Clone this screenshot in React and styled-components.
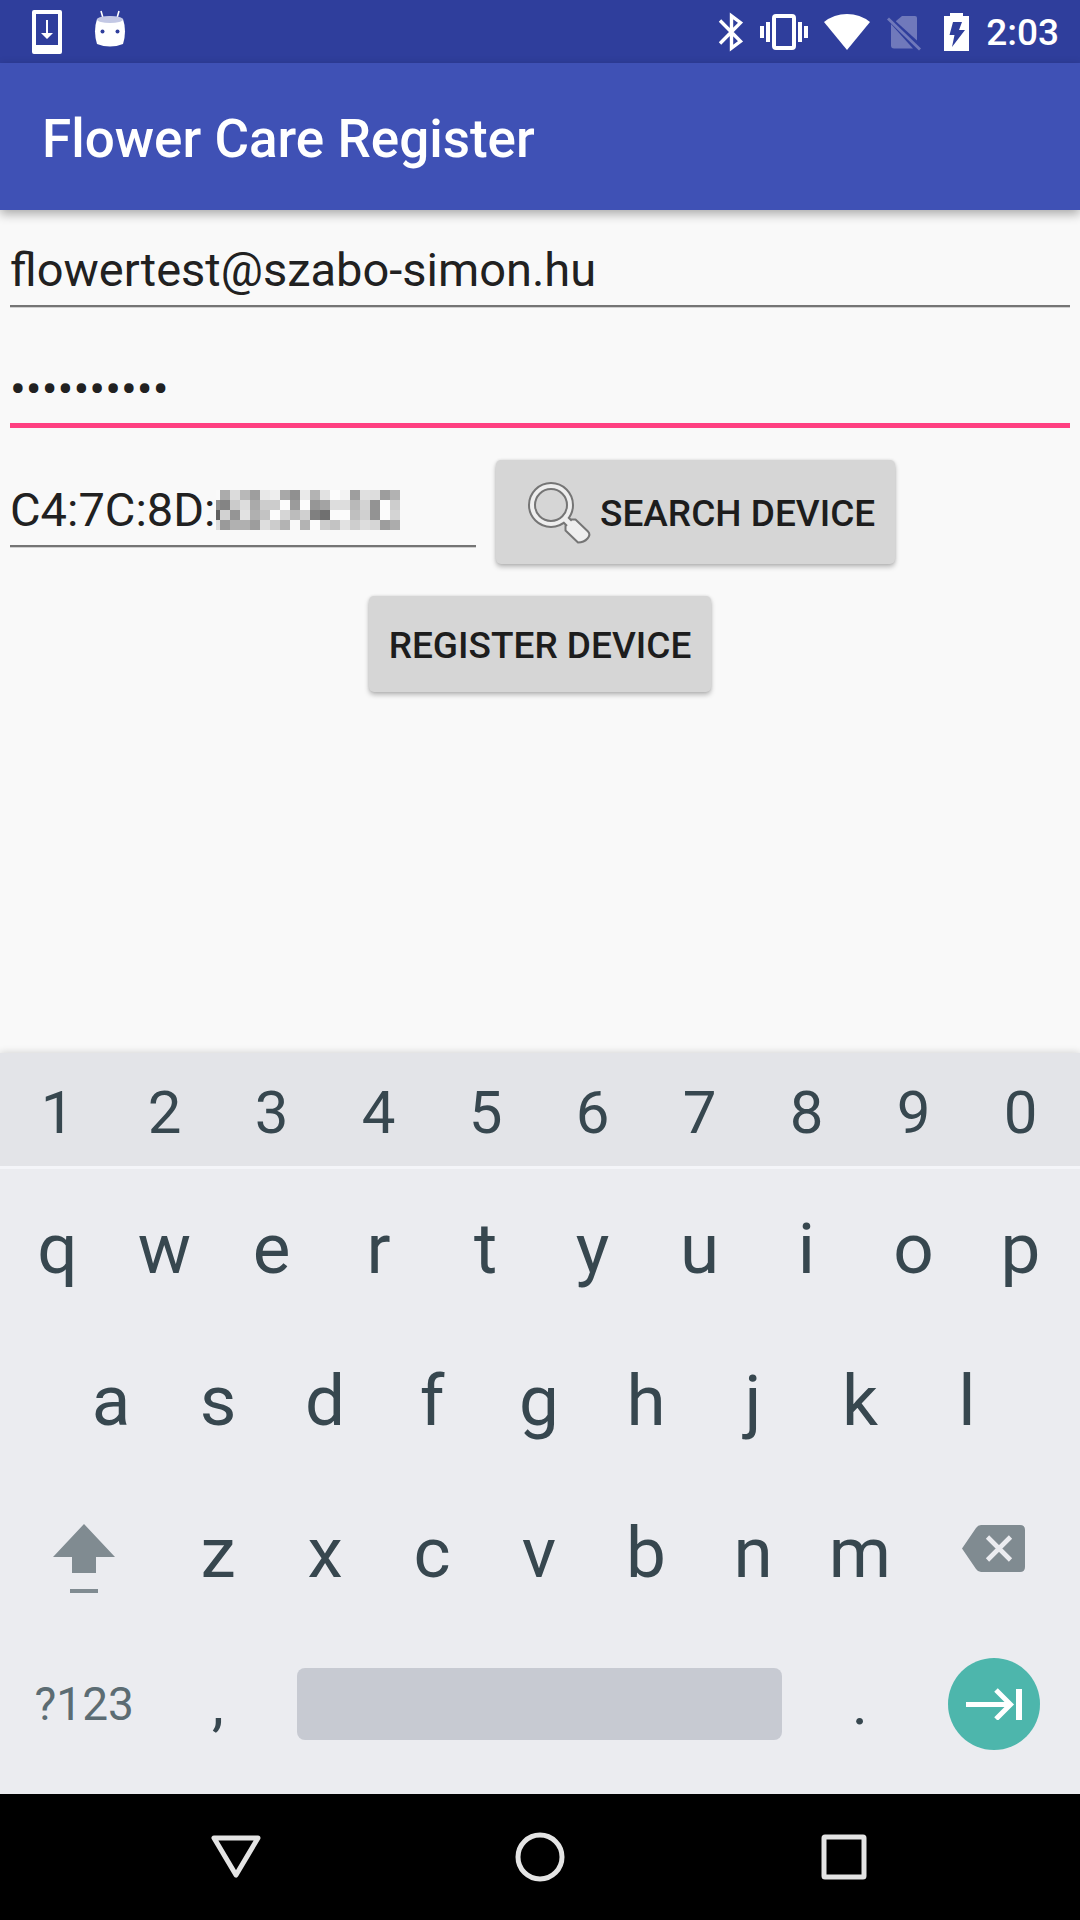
import React from "react";
import styled, { createGlobalStyle, css } from "styled-components";

const GlobalStyle = createGlobalStyle`
  *, *::before, *::after { box-sizing: border-box; }
  body {
    margin: 0;
    background: #f9f9f9;
    font-family: Roboto, "Noto Sans", sans-serif;
  }
  button, input { font: inherit; margin: 0; border: 0; padding: 0; background: none; }
  svg { display: block; flex: none; }
`;

const Screen = styled.div`
  display: flex;
  flex-direction: column;
  min-height: 100vh;
`;

const StatusBar = styled.header`
  display: flex;
  align-items: center;
  justify-content: space-between;
  height: 63px;
  padding: 0 21px 0 32px;
  background: #2f3e9c;
  color: #fff;
`;

const Notifications = styled.div`
  display: flex;
  align-items: center;
  gap: 32px;
`;

const SystemIcons = styled.div`
  display: flex;
  align-items: center;
  gap: 16px;
`;

const Clock = styled.time`
  padding-top: 2px;
  font-size: 37px;
  font-weight: 500;
  line-height: 44px;
`;

const AppBar = styled.div`
  display: flex;
  align-items: center;
  height: 147px;
  padding: 4px 42px 0;
  background: #3f51b5;
  box-shadow: 0 4px 10px rgba(0, 0, 0, 0.32);
`;

const Title = styled.h1`
  margin: 0;
  color: #fff;
  font-size: 53px;
  font-weight: 500;
  line-height: 64px;
`;

const Form = styled.form`
  display: flex;
  flex: 1;
  flex-direction: column;
  gap: 32px;
  padding: 10px;
`;

const Field = styled.div`
  display: flex;
  padding: 22px 0 ${(p) => (p.$active ? "7px" : "8px")};
  ${(p) =>
    p.$active
      ? css`
          border-bottom: 5px solid #ff4081;
        `
      : css`
          border-bottom: 2px solid #757575;
          box-shadow: 0 1px 0 #d0d0d0;
        `}
  ${(p) => p.$compact && "flex: 0 1 466px;"}
`;

const TextInput = styled.input`
  flex: ${(p) => (p.$partial ? "0 0 206px" : "1")};
  min-width: 0;
  height: 55px;
  color: #212121;
  font-size: 47px;
  line-height: 55px;
  outline: none;
`;

const DeviceRow = styled.div`
  display: flex;
  align-items: flex-start;
  gap: 20px;
`;

const RaisedButton = styled.button`
  display: flex;
  align-items: center;
  align-self: ${(p) => (p.$centered ? "center" : "flex-start")};
  min-height: 96px;
  padding: 12px 20px 8px;
  border-radius: 5px;
  background: #d6d6d6;
  box-shadow: 0 3px 5px rgba(0, 0, 0, 0.25), 0 0 3px rgba(0, 0, 0, 0.12);
  color: #1d1d1d;
  font-size: 37px;
  font-weight: 500;
  line-height: 44px;
  white-space: nowrap;
`;

const Keyboard = styled.section`
  background: #ebecf0;
  box-shadow: 0 -1px 7px rgba(0, 0, 0, 0.14);
`;

const NumberRow = styled.div`
  display: flex;
  height: 116px;
  padding: 7px 6px 0 4px;
  border-bottom: 3px solid #f4f5f9;
  background: #e3e4e8;
`;

const LetterRows = styled.div`
  display: flex;
  flex-direction: column;
  padding: 3px 6px 14px 4px;
`;

const KeyRow = styled.div`
  display: flex;
  justify-content: center;
  height: 152px;
`;

const keySizes = { letter: "71px", digit: "60px", label: "46px" };

const Key = styled.button`
  display: flex;
  flex: 0 0 ${(p) => (p.$units || 1) * 10}%;
  align-items: center;
  justify-content: center;
  color: ${(p) => (p.$size === "label" ? "#5c6c73" : "#37474f")};
  font-size: ${(p) => keySizes[p.$size || "letter"]};
  line-height: 1;
`;

const SpaceBar = styled.span`
  flex: 1;
  height: 72px;
  margin: 0 25px;
  border-radius: 8px;
  background: #c7cad2;
`;

const NextDisc = styled.span`
  display: flex;
  align-items: center;
  justify-content: center;
  width: 92px;
  height: 92px;
  border-radius: 50%;
  background: #4db6ac;
`;

const NavBar = styled.nav`
  display: flex;
  justify-content: center;
  height: 126px;
  background: #000;
`;

const NavButton = styled.button`
  display: flex;
  flex: 0 1 304px;
  align-items: center;
  justify-content: center;
`;

const DownloadIcon = () => (
  <svg width="30" height="44" viewBox="0 0 30 44" aria-hidden="true">
    <path fill="#fff" fillRule="evenodd" d="M2 0h26q2 0 2 2v40q0 2-2 2H2q-2 0-2-2V2Q0 0 2 0ZM4 4v31h22V4Z" />
    <path fill="#fff" d="M14 10h2v13h5l-6 6-6-6h5Z" />
  </svg>
);

const DroidIcon = () => (
  <svg width="32" height="44" viewBox="0 0 32 44" aria-hidden="true">
    <path d="M7 1l2 7M25 1l-2 7" stroke="#fff" strokeWidth="1.6" fill="none" />
    <path fill="#fff" d="M3 9Q16 4 29 9Q33 21 29 34Q16 39 3 34Q-1 21 3 9Z" />
    <ellipse cx="16" cy="9.500" rx="13" ry="3.500" fill="#c3c8e4" />
    <circle cx="8.500" cy="21.500" r="2" fill="#2f3e9c" />
    <circle cx="23.500" cy="21.500" r="2" fill="#2f3e9c" />
  </svg>
);

const BluetoothIcon = () => (
  <svg width="26" height="40" viewBox="0 0 26 40" aria-hidden="true">
    <path d="M2 8.500l20.500 20.800L13.500 36V4l9 6.700L2 31.500" fill="none" stroke="#fff" strokeWidth="3.400" />
  </svg>
);

const VibrateIcon = () => (
  <svg width="48" height="38" viewBox="0 0 48 38" aria-hidden="true">
    <rect x="14" y="3" width="20" height="32" rx="2" fill="none" stroke="#fff" strokeWidth="4" />
    <path fill="#fff" d="M0 13h4v12H0zM6 9h4v20H6zM38 9h4v20h-4zM44 13h4v12h-4z" />
  </svg>
);

const WifiIcon = () => (
  <svg width="46" height="38" viewBox="0 0 46 38" aria-hidden="true">
    <path fill="#fff" d="M0 9Q10 1 23 1T46 9L23 37Z" />
  </svg>
);

const NoSimIcon = () => (
  <svg width="42" height="38" viewBox="0 0 42 38" aria-hidden="true">
    <g fill="#7079bb">
      <path d="M10 8l6-5h13q2 0 2 2v22.500L10 8.500Z" />
      <path d="M5 11l22 24.500H8q-3 0-3-3Z" />
      <path d="M1 6.500L3 4.500l32 31-2 2Z" />
    </g>
  </svg>
);

const BatteryIcon = () => (
  <svg width="26" height="38" viewBox="0 0 26 38" aria-hidden="true">
    <path fill="#fff" d="M6 0h13v3h6v35H0V3h6Z" />
    <path fill="#2f3e9c" d="M9 9h9l-3 8h6L8 34l2.500-12H5.500Z" />
  </svg>
);

const SearchIcon = () => (
  <svg width="84" height="84" viewBox="0 0 84 84" aria-hidden="true">
    <path d="M48 46L54 52" fill="none" stroke="#757575" strokeWidth="9" />
    <path
      d="M55.500 47.500h4L72 59.500q3 3-.5 7t-9.500 4L49.500 58.500V54Z"
      fill="#eee"
      stroke="#757575"
      strokeWidth="2"
      strokeLinejoin="round"
    />
    <circle cx="35" cy="33" r="19" fill="none" stroke="#757575" strokeWidth="8" />
    <circle cx="35" cy="33" r="19" fill="none" stroke="#eee" strokeWidth="4" />
    <path d="M49 47L57 55" fill="none" stroke="#eee" strokeWidth="5" />
  </svg>
);

const ShiftIcon = () => (
  <svg width="64" height="88" viewBox="0 -16 64 88" aria-hidden="true">
    <path fill="#808b91" d="M32 0l31 33H44v16H20V33H1ZM18 65h28v4H18z" />
  </svg>
);

const BackspaceIcon = () => (
  <svg width="64" height="88" viewBox="0 -16 64 88" aria-hidden="true">
    <path fill="#808b91" d="M19 1h39q5 0 5 5v37q0 5-5 5H19q-3 0-5-3L0 24.500 14 4q2-3 5-3Z" />
    <path d="M25.500 13l23 23m0-23l-23 23" stroke="#ebecf0" strokeWidth="4.600" />
  </svg>
);

const NextIcon = () => (
  <svg width="56" height="32" viewBox="0 0 56 32" aria-hidden="true">
    <path d="M0 16.500h44M30 2l14.500 14.500L30 31" fill="none" stroke="#fff" strokeWidth="5" />
    <path d="M53 1v31" stroke="#fff" strokeWidth="6" />
  </svg>
);

const navShapes = {
  Back: <path d="M3 6h44L25 43Z" />,
  Home: <circle cx="25" cy="25" r="22" />,
  Overview: <rect x="5" y="5" width="40" height="40" rx="1" />,
};

const maskRows = [
  ["fa", "ab", "dc", "b8", "9e", "e8", "ee", "a8", "90", "ea", "b3", "e2", "fc", "f3", "9e", "e0", "dd", "9d", "b2"],
  ["90", "84", "cb", "dd", "aa", "cd", "cc", "fc", "9b", "fc", "96", "a3", "dd", "dd", "b9", "d3", "93", "fc", "cd"],
  ["60", "d2", "95", "e2", "b0", "c3", "fc", "d6", "bc", "d0", "80", "70", "fa", "fc", "bf", "d0", "93", "fb", "d4"],
  ["dd", "9a", "b1", "b0", "9d", "de", "cc", "b3", "f9", "b3", "fb", "cd", "c3", "e2", "ce", "dd", "d6", "9d", "ac"],
];

const AddressMask = () => (
  <svg width="184" height="55" viewBox="6 -8 184 55" shapeRendering="crispEdges" aria-hidden="true">
    {maskRows.map((row, y) =>
      row.map((v, x) => (
        <rect key={`${x}-${y}`} x={x * 10} y={y * 10} width="10" height="10" fill={`#${v}${v}${v}`} />
      ))
    )}
  </svg>
);

const letterKeys = (letters) =>
  letters.split("").map((c) => (
    <Key key={c} type="button">
      {c}
    </Key>
  ));

export default function App() {
  return (
    <Screen>
      <GlobalStyle />
      <StatusBar>
        <Notifications>
          <DownloadIcon />
          <DroidIcon />
        </Notifications>
        <SystemIcons>
          <BluetoothIcon />
          <VibrateIcon />
          <WifiIcon />
          <NoSimIcon />
          <BatteryIcon />
          <Clock>2:03</Clock>
        </SystemIcons>
      </StatusBar>
      <AppBar>
        <Title>Flower Care Register</Title>
      </AppBar>
      <Form onSubmit={(e) => e.preventDefault()}>
        <Field>
          <TextInput type="text" aria-label="Email" defaultValue="flowertest@szabo-simon.hu" />
        </Field>
        <Field $active>
          <TextInput type="password" aria-label="Password" defaultValue="flowercare" />
        </Field>
        <DeviceRow>
          <Field $compact>
            <TextInput $partial type="text" aria-label="Device address" defaultValue="C4:7C:8D:" />
            <AddressMask />
          </Field>
          <RaisedButton type="button">
            <SearchIcon />
            SEARCH DEVICE
          </RaisedButton>
        </DeviceRow>
        <RaisedButton type="submit" $centered>
          REGISTER DEVICE
        </RaisedButton>
      </Form>
      <Keyboard aria-label="Keyboard">
        <NumberRow>
          {"1234567890".split("").map((n) => (
            <Key key={n} type="button" $size="digit">
              {n}
            </Key>
          ))}
        </NumberRow>
        <LetterRows>
          <KeyRow>{letterKeys("qwertyuiop")}</KeyRow>
          <KeyRow>{letterKeys("asdfghjkl")}</KeyRow>
          <KeyRow>
            <Key type="button" $units={1.5} aria-label="Shift">
              <ShiftIcon />
            </Key>
            {letterKeys("zxcvbnm")}
            <Key type="button" $units={1.5} aria-label="Backspace">
              <BackspaceIcon />
            </Key>
          </KeyRow>
          <KeyRow>
            <Key type="button" $units={1.5} $size="label">
              ?123
            </Key>
            <Key type="button" $size="digit">
              ,
            </Key>
            <Key type="button" $units={5} aria-label="Space">
              <SpaceBar />
            </Key>
            <Key type="button" $size="digit">
              .
            </Key>
            <Key type="button" $units={1.5} aria-label="Next">
              <NextDisc>
                <NextIcon />
              </NextDisc>
            </Key>
          </KeyRow>
        </LetterRows>
      </Keyboard>
      <NavBar aria-label="System">
        {Object.entries(navShapes).map(([name, shape]) => (
          <NavButton key={name} type="button" aria-label={name}>
            <svg
              width="50"
              height="50"
              viewBox="0 0 50 50"
              fill="none"
              stroke="#e4e4e4"
              strokeWidth="5"
              strokeLinejoin="round"
              aria-hidden="true"
            >
              {shape}
            </svg>
          </NavButton>
        ))}
      </NavBar>
    </Screen>
  );
}
